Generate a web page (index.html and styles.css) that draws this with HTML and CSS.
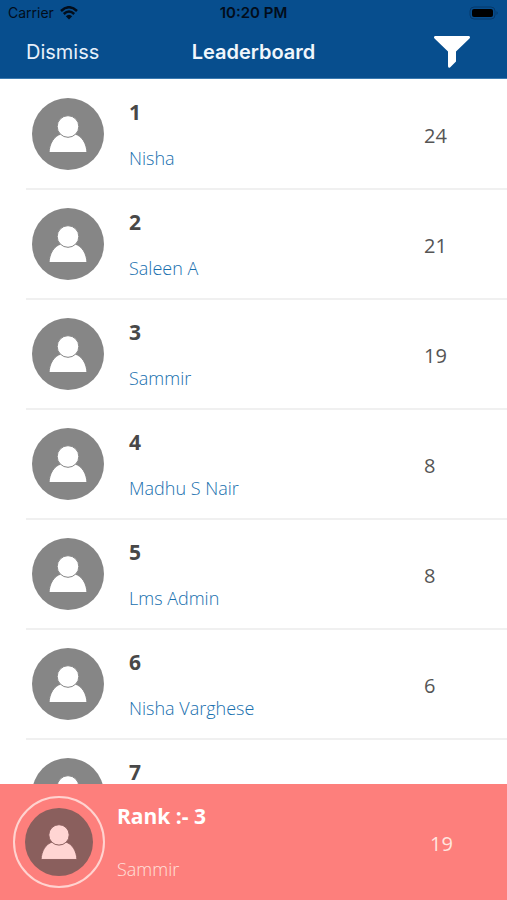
FILE: index.html
```html
<!DOCTYPE html>
<html lang="en">
<head>
<meta charset="utf-8">
<meta name="viewport" content="width=device-width, initial-scale=1">
<title>Leaderboard</title>
<link rel="stylesheet" href="styles.css">
</head>
<body>
<svg class="symbols" aria-hidden="true">
  <symbol id="person" viewBox="0 0 72 72">
    <circle class="disc" cx="36" cy="36" r="36"/>
    <path class="figure" d="M17 54.500C17.500 45.500 22 38 29 36Q36 41.500 43 36C50 38 54.500 45.500 55 54.500Z"/>
    <circle class="figure" cx="36" cy="28.500" r="10.800"/>
  </symbol>
</svg>
<header class="top">
  <div class="status">
    <span class="carrier">Carrier
      <svg class="wifi" viewBox="0 0 18 14" aria-hidden="true">
        <path d="M1 5Q9 -2.500 17 5M3.800 8Q9 3 14.200 8" fill="none" stroke="#020d1b" stroke-width="2.500"/>
        <path d="M5.800 10.200Q9 7.200 12.200 10.200L9 13.500Z" fill="#020d1b"/>
      </svg>
    </span>
    <span class="time">10:20 PM</span>
    <svg class="battery" viewBox="0 0 30 14" aria-hidden="true">
      <rect x="1" y="1" width="25" height="12" rx="4" fill="none" stroke="#06396b"/>
      <rect x="3" y="3" width="21" height="8" rx="2" fill="#000"/>
      <path d="M27.500 5Q30 7 27.500 9Z" fill="#06396b"/>
    </svg>
  </div>
  <nav class="bar">
    <button class="dismiss" type="button">Dismiss</button>
    <h1 class="title">Leaderboard</h1>
    <button class="filter" type="button" aria-label="Filter">
      <svg viewBox="0 0 38 34" aria-hidden="true"><path d="M2.500 1H35.500Q38 1.500 36.500 3.500L23 16.500V26.500L17 32.500Q15 33.500 15 31V16.500L1.500 3.500Q0 1.500 2.500 1Z" fill="#fff"/></svg>
    </button>
  </nav>
</header>
<main class="board">
  <ol class="list">
    <li class="row"><svg class="avatar"><use href="#person"/></svg><div class="who"><b class="rank">1</b><span class="name">Nisha</span></div><span class="score">24</span></li>
    <li class="row"><svg class="avatar"><use href="#person"/></svg><div class="who"><b class="rank">2</b><span class="name">Saleen A</span></div><span class="score">21</span></li>
    <li class="row"><svg class="avatar"><use href="#person"/></svg><div class="who"><b class="rank">3</b><span class="name">Sammir</span></div><span class="score">19</span></li>
    <li class="row"><svg class="avatar"><use href="#person"/></svg><div class="who"><b class="rank">4</b><span class="name">Madhu S Nair</span></div><span class="score">8</span></li>
    <li class="row"><svg class="avatar"><use href="#person"/></svg><div class="who"><b class="rank">5</b><span class="name">Lms Admin</span></div><span class="score">8</span></li>
    <li class="row"><svg class="avatar"><use href="#person"/></svg><div class="who"><b class="rank">6</b><span class="name">Nisha Varghese</span></div><span class="score">6</span></li>
    <li class="row"><svg class="avatar"><use href="#person"/></svg><div class="who"><b class="rank">7</b></div></li>
  </ol>
</main>
<footer class="mine">
  <span class="ring"><svg class="avatar"><use href="#person"/></svg></span>
  <div class="who"><b class="rank">Rank :- 3</b><span class="name">Sammir</span></div>
  <span class="score">19</span>
</footer>
</body>
</html>
```
FILE: styles.css
```css
* { box-sizing: border-box; }
body {
  margin: 0;
  height: 100vh;
  display: flex;
  flex-direction: column;
  background: #fff;
  font-family: "Open Sans", "Noto Sans", sans-serif;
}
.symbols { position: absolute; width: 0; height: 0; }
.top {
  flex: none;
  background: #074e8e;
  border-bottom: 1px solid #3b7ab0;
  font-family: Inter, "Liberation Sans", sans-serif;
}
.status, .bar {
  display: grid;
  grid-template-columns: 1fr auto 1fr;
  align-items: center;
}
.status {
  height: 26px;
  padding: 0 8px;
  font-size: 14px;
  line-height: 26px;
  color: #020d1b;
}
.carrier { display: flex; align-items: center; gap: 6px; }
.wifi { width: 18px; height: 14px; }
.time { font-size: 15px; font-weight: 600; }
.battery { width: 30px; height: 14px; justify-self: end; }
.bar { height: 52px; padding: 0 26px; color: #fff; }
button { border: 0; padding: 0; background: none; color: #e6f0fa; font: inherit; }
.dismiss { justify-self: start; font-size: 20px; }
.title { margin: 0; font-size: 20px; font-weight: 600; color: #f0f6fc; }
.filter { justify-self: end; padding-right: 10px; }
.filter svg { display: block; width: 38px; height: 34px; }
.board { flex: 1; min-height: 0; overflow: hidden; }
.list { margin: 0; padding: 1px 0 0 26px; list-style: none; }
.row {
  display: flex;
  align-items: center;
  height: 110px;
  padding-left: 6px;
  border-bottom: 2px solid #f0f0f0;
}
.avatar { flex: none; display: block; width: 72px; height: 72px; }
.disc { fill: var(--disc, #868686); }
.figure { fill: var(--figure, #fff); stroke: var(--disc, #868686); stroke-width: 1; }
.who {
  flex: 1;
  align-self: flex-start;
  display: flex;
  flex-direction: column;
  gap: 18px;
  padding: 18px 0 0 25px;
}
.rank { font-size: 21px; line-height: 28px; font-weight: 700; color: #484848; }
.name { font-size: 18px; line-height: 28px; font-weight: 300; color: #176fae; }
.score { width: 83px; padding-top: 4px; font-size: 20px; line-height: 28px; color: #555; }
.mine {
  flex: none;
  display: flex;
  align-items: center;
  height: 116px;
  padding-left: 13px;
  background: #fd7f7c;
}
.ring { border: 2px solid #ffd3d0; border-radius: 50%; padding: 10px; }
.mine .avatar { --disc: #8a5f5d; --figure: #ffd5d3; width: 68px; height: 68px; }
.mine .who { padding-left: 12px; gap: 25px; }
.mine .rank { color: #fff; }
.mine .name { color: #ffe0db; }
.mine .score { width: 77px; color: #ffe5df; }
```
